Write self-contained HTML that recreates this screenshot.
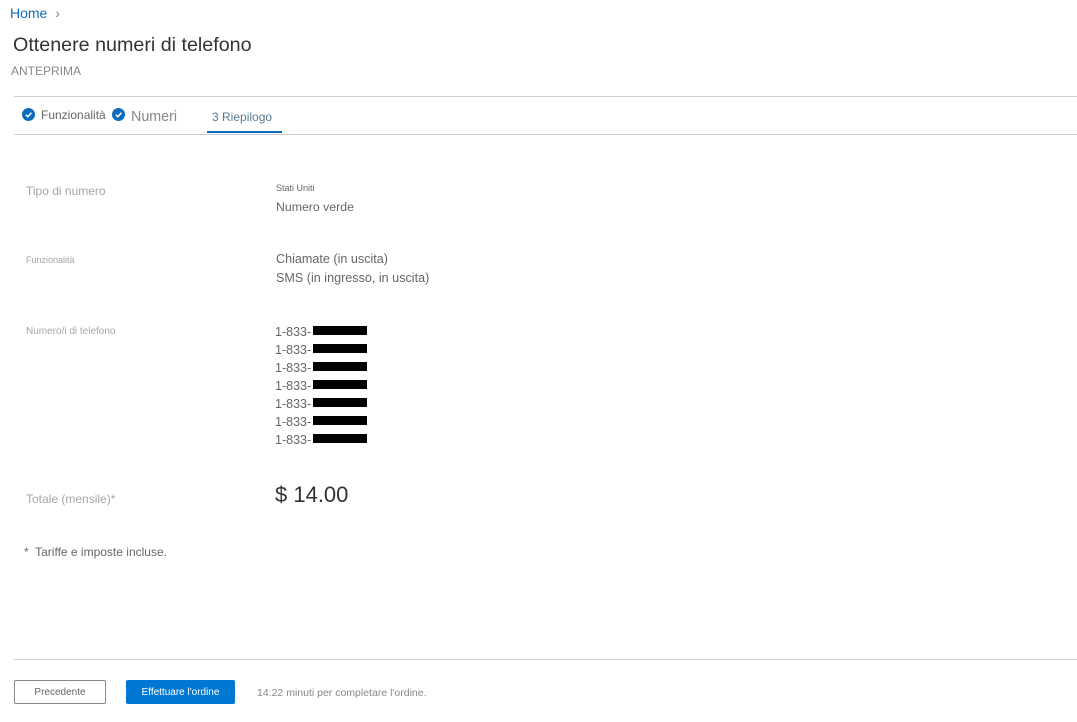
<!DOCTYPE html>
<html><head><style>
body{margin:0;width:1077px;height:722px;background:#fff;font-family:"Liberation Sans",sans-serif;position:relative;overflow:hidden}
.a{position:absolute;white-space:nowrap}
.g{color:#a6a6a6}
.t{color:#666}
.bar{position:absolute;left:313px;width:54px;height:9px;background:#000}
.chk{position:absolute;width:13px;height:13px;border-radius:50%;background:#0f6cbd}
.btn{display:flex;align-items:center;justify-content:center;box-sizing:border-box}
</style></head><body>
<div class="a" style="left:10px;top:5px;font-size:14px;color:#0f6cbd">Home <span style="color:#888;margin-left:4px">&#x203A;</span></div>
<div class="a" style="left:13px;top:34px;font-size:19.7px;color:#333">Ottenere numeri di telefono</div>
<div class="a" style="left:11px;top:64px;font-size:12px;color:#888">ANTEPRIMA</div>
<div class="a" style="left:14px;top:96px;width:1063px;height:1px;background:#d0d0d0"></div>
<div class="chk" style="left:22px;top:108px"><svg width="13" height="13"><path d="M3.8 6.8l2 2 3.6-4" stroke="#fff" stroke-width="1.5" fill="none"/></svg></div>
<div class="a t" style="left:41px;top:108px;font-size:12px">Funzionalità</div>
<div class="chk" style="left:112px;top:108px"><svg width="13" height="13"><path d="M3.8 6.8l2 2 3.6-4" stroke="#fff" stroke-width="1.5" fill="none"/></svg></div>
<div class="a" style="left:131px;top:109px;font-size:14.3px;color:#888">Numeri</div>
<div class="a" style="left:212px;top:110px;font-size:12px;color:#5a7a90">3 Riepilogo</div>
<div class="a" style="left:207px;top:131px;width:75px;height:2px;background:#0f6cbd"></div>
<div class="a" style="left:14px;top:134px;width:1063px;height:1px;background:#d0d0d0"></div>

<div class="a g" style="left:26px;top:184px;font-size:12px">Tipo di numero</div>
<div class="a t" style="left:276px;top:183px;font-size:9px">Stati Uniti</div>
<div class="a t" style="left:276px;top:200px;font-size:12.3px">Numero verde</div>
<div class="a g" style="left:26px;top:255px;font-size:9px">Funzionalità</div>
<div class="a t" style="left:276px;top:252px;font-size:12.6px">Chiamate (in uscita)</div>
<div class="a t" style="left:276px;top:271px;font-size:12.6px">SMS (in ingresso, in uscita)</div>
<div class="a g" style="left:26px;top:326px;font-size:10px">Numero/i di telefono</div>
<div class="a t" style="left:275px;top:323px;font-size:12.5px;line-height:18px">1-833-<br>1-833-<br>1-833-<br>1-833-<br>1-833-<br>1-833-<br>1-833-</div>
<div class="bar" style="top:326px"></div><div class="bar" style="top:344px"></div><div class="bar" style="top:362px"></div><div class="bar" style="top:380px"></div><div class="bar" style="top:398px"></div><div class="bar" style="top:416px"></div><div class="bar" style="top:434px"></div>
<div class="a g" style="left:26px;top:492px;font-size:12px">Totale (mensile)*</div>
<div class="a" style="left:275px;top:482px;font-size:22px;color:#333">$ 14.00</div>
<div class="a t" style="left:24px;top:545px;font-size:12px">*&nbsp; Tariffe e imposte incluse.</div>

<div class="a" style="left:14px;top:659px;width:1063px;height:1px;background:#d0d0d0"></div>
<div class="a btn" style="left:14px;top:680px;width:92px;height:24px;border:1px solid #8a8a8a;border-radius:2px;font-size:10px;color:#666">Precedente</div>
<div class="a btn" style="left:126px;top:680px;width:109px;height:24px;background:#0078d4;border-radius:2px;font-size:10px;color:#fff">Effettuare l'ordine</div>
<div class="a" style="left:257px;top:687px;font-size:10.5px;color:#888">14:22 minuti per completare l'ordine.</div>
</body></html>
